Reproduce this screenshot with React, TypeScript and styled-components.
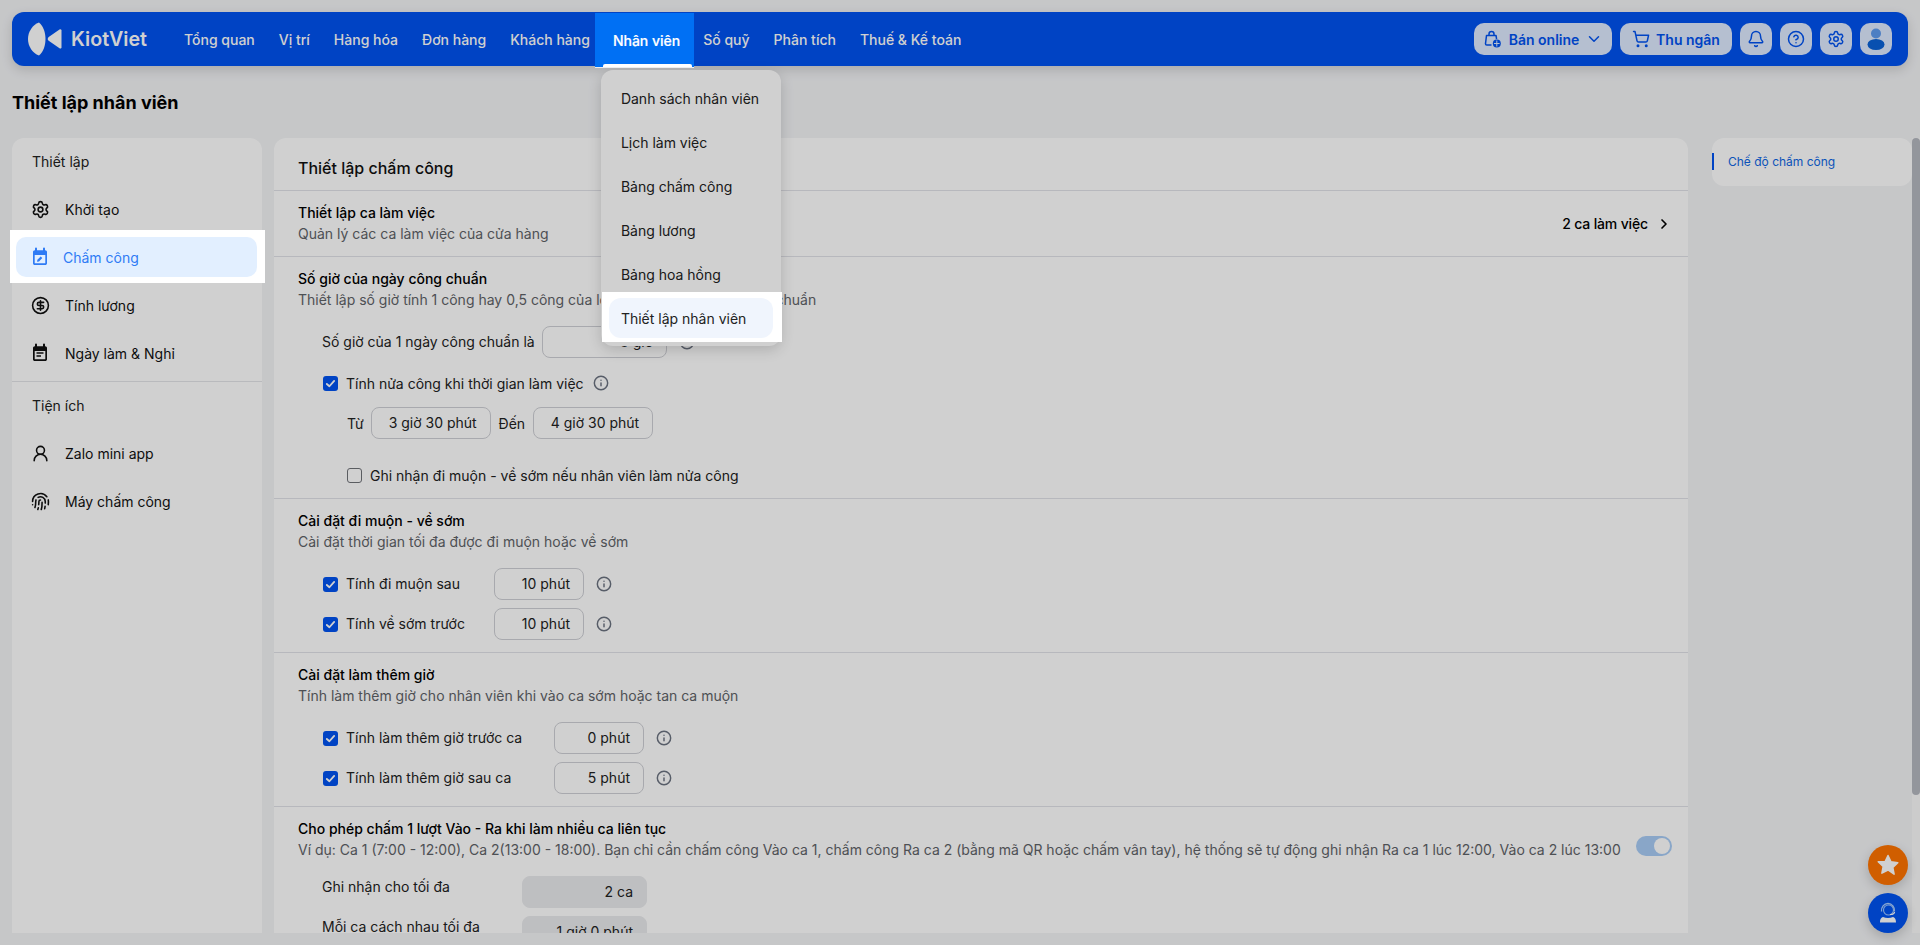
import React from 'react'
import styled, { createGlobalStyle } from 'styled-components'
import { Bell, ChevronDown, ChevronRight, CircleDollarSign, CircleHelp, Fingerprint, Info, Settings, ShoppingCart, UserRound } from 'lucide-react'

const brand = '#0053f1'

const GlobalStyle = createGlobalStyle`
  html, body {
    margin: 0;
    height: 100%;
    overflow: hidden;
    background: #f3f4f6;
    font-family: Inter, "Noto Sans", sans-serif;
    font-size: 14px;
    color: #111;
  }
  * { box-sizing: border-box; }
`

const Page = styled.div`
  height: 945px;
  display: flex;
  flex-direction: column;
`
const Dim = styled.div`
  position: fixed;
  inset: 0;
  z-index: 10;
  background: rgba(0, 0, 0, 0.184);
`

/* header */
const Header = styled.header`
  margin: 12px 12px 0;
  height: 54px;
  flex-shrink: 0;
  display: flex;
  align-items: center;
  padding: 0 16px;
  border-radius: 12px;
  background: ${brand};
  box-shadow: 0 4px 12px rgba(0, 0, 0, 0.14);
`
const Logo = styled.div`
  display: flex;
  align-items: center;
  gap: 9px;
  width: 144px;
  flex-shrink: 0;
  color: #fff;
  font-size: 19.7px;
  font-weight: 600;
`
const Nav = styled.nav`
  display: flex;
  align-items: center;
  height: 100%;
`
const NavItem = styled.div`
  padding: 0 12px;
  color: #fff;
  font-weight: 500;
  white-space: nowrap;
`
const NavSlot = styled.div`
  position: relative;
  height: 100%;
`
const ActiveNav = styled.div`
  position: relative;
  z-index: 11;
  height: 55px;
  margin: 1px -3px 0 -7px;
  padding: 0 14px 0 18px;
  display: flex;
  align-items: center;
  background: #0070f4;
  border-bottom: 1.5px solid #eceef0;
  color: #fff;
  font-weight: 500;
  -webkit-text-stroke: 0.2px #fff;
  white-space: nowrap;
  &::after {
    content: '';
    position: absolute;
    left: 8px;
    right: 2px;
    bottom: 0;
    height: 3px;
    border-radius: 2px 2px 0 0;
    background: #fff;
  }
`
const Menu = styled.div`
  position: absolute;
  left: -1px;
  top: 58px;
  width: 180px;
  padding: 8px;
  display: flex;
  flex-direction: column;
  gap: 4px;
  border-radius: 12px;
  background: #fff;
  box-shadow: 0 4px 14px rgba(0, 0, 0, 0.16);
`
const MenuItem = styled.div<{ $active?: boolean }>`
  height: 40px;
  display: flex;
  align-items: center;
  padding: 0 12px;
  border-radius: 12px;
  white-space: nowrap;
  color: #222;
  background: ${p => (p.$active ? '#f0f5fd' : 'transparent')};
`
const MenuCutout = styled.div`
  position: relative;
  z-index: 11;
  margin: -6px -9px -4px -7px;
  padding: 6px 9px 4px 7px;
  background: #fff;
`
const Actions = styled.div`
  margin-left: auto;
  display: flex;
  align-items: center;
  gap: 8px;
`
const ActionButton = styled.div<{ $width: number }>`
  width: ${p => p.$width}px;
  height: 32px;
  display: flex;
  align-items: center;
  justify-content: center;
  gap: 6px;
  border-radius: 10px;
  background: #deeaff;
  color: ${brand};
  font-weight: 600;
  white-space: nowrap;
`

/* title + columns */
const PageTitle = styled.h1`
  margin: 0;
  height: 72px;
  flex-shrink: 0;
  padding: 0 12px;
  display: flex;
  align-items: center;
  font-size: 18px;
  font-weight: 700;
  color: #000;
`
const Columns = styled.div`
  height: 795px;
  flex-shrink: 0;
  display: flex;
  padding-left: 12px;
`
const Sidebar = styled.aside`
  width: 250px;
  flex-shrink: 0;
  border-radius: 12px 12px 0 0;
  background: #fff;
`
const SideLabel = styled.div`
  height: 48px;
  padding: 0 0 1px 20px;
  display: flex;
  align-items: center;
  color: #222;
`
const SideList = styled.div`
  margin-top: 3px;
  padding: 0 5px 0 4px;
  display: flex;
  flex-direction: column;
  gap: 8px;
`
const SideItem = styled.div<{ $active?: boolean }>`
  height: 40px;
  display: flex;
  align-items: center;
  gap: ${p => (p.$active ? '13px' : '15px')};
  padding-left: 14px;
  border-radius: 10px;
  background: ${p => (p.$active ? '#e2efff' : 'transparent')};
  color: ${p => (p.$active ? '#2f7bf5' : '#111')};
`
const SideIcon = styled.span`
  width: 20px;
  height: 20px;
  flex-shrink: 0;
  display: flex;
  align-items: center;
  justify-content: center;
`
const SideCutout = styled.div`
  position: relative;
  z-index: 11;
  margin: -7px -8px -6px -6px;
  padding: 7px 8px 6px 6px;
  background: #fff;
`
const SideDivider = styled.hr`
  margin: 8px 0 0;
  border: 0;
  border-top: 1px solid #e3e4e8;
`
const Main = styled.main`
  width: 1414px;
  margin-left: 12px;
  flex-shrink: 0;
  overflow: hidden;
  border-radius: 12px 12px 0 0;
  background: #fff;
`
const MainHead = styled.div`
  height: 52px;
  padding: 8px 24px 0;
  display: flex;
  align-items: center;
  font-size: 16px;
  font-weight: 500;
`
const Section = styled.section`
  border-top: 1px solid #e1e2e8;
  padding: 12px 16px 12px 24px;
`
const SectionHead = styled.div`
  display: flex;
  justify-content: space-between;
  align-items: center;
`
const SectionTitle = styled.div`
  height: 20px;
  line-height: 20px;
  font-weight: 500;
  color: #000;
`
const SectionDesc = styled.div`
  margin-top: 1px;
  height: 20px;
  line-height: 20px;
  color: #5f6368;
  white-space: nowrap;
`
const LinkValue = styled.div`
  display: flex;
  align-items: center;
  gap: 8px;
  font-weight: 500;
  letter-spacing: -0.15px;
  color: #000;
`
const Rows = styled.div`
  margin-top: 16px;
  padding-left: 24px;
  display: flex;
  flex-direction: column;
  gap: 8px;
`
const Row = styled.div<{ $indent?: boolean; $top?: number; $short?: boolean }>`
  min-height: ${p => (p.$short ? 21 : 32)}px;
  display: flex;
  align-items: center;
  margin-left: ${p => (p.$indent ? '25px' : '0')};
  margin-top: ${p => p.$top ?? 0}px;
  color: #222;
  white-space: nowrap;
`
const RowLabel = styled.div<{ $width: number; $top?: boolean }>`
  width: ${p => p.$width}px;
  flex-shrink: 0;
  align-self: ${p => (p.$top ? 'flex-start' : 'center')};
  line-height: 22px;
`
const Box = styled.div<{ $width: number; $disabled?: boolean }>`
  width: ${p => p.$width}px;
  height: 32px;
  flex-shrink: 0;
  display: flex;
  align-items: center;
  justify-content: flex-end;
  padding: 0 13px 1px 0;
  border-radius: 8px;
  border: 1px solid ${p => (p.$disabled ? '#e9eaed' : '#cfd0d6')};
  background: ${p => (p.$disabled ? '#e9eaed' : '#fff')};
  color: #222;
`
const Check = styled.span<{ $on?: boolean }>`
  width: 15px;
  height: 15px;
  flex-shrink: 0;
  margin: 0 8px 0 ${p => (p.$on ? 1 : 0)}px;
  display: flex;
  align-items: center;
  justify-content: center;
  border-radius: 3px;
  background: ${p => (p.$on ? brand : '#fff')};
  border: ${p => (p.$on ? '0' : '1.5px solid #6f7278')};
`
const Tip = styled(Info)<{ $gap?: number }>`
  width: 16px;
  height: 16px;
  flex-shrink: 0;
  margin-left: ${p => p.$gap ?? 12}px;
  color: #6b7280;
  stroke-width: 2.2;
`
const RangeText = styled.span<{ $gap: number }>`
  margin-right: ${p => p.$gap}px;
`
const Toggle = styled.div`
  width: 36px;
  height: 20px;
  margin-top: 13px;
  padding: 2px;
  display: flex;
  justify-content: flex-end;
  border-radius: 10px;
  background: #a8ccf6;
  &::after {
    content: '';
    width: 16px;
    height: 16px;
    border-radius: 50%;
    background: #fff;
  }
`

/* right rail */
const Rail = styled.aside`
  width: 200px;
  height: 48px;
  margin-left: 24px;
  flex-shrink: 0;
  display: flex;
  align-items: center;
  gap: 14px;
  padding-bottom: 1px;
  border-radius: 12px;
  background: #fff;
  color: #0d66e4;
  font-size: 12px;
  &::before {
    content: '';
    width: 2px;
    height: 17px;
    background: ${brand};
  }
`
const ScrollTrack = styled.div`
  width: 8px;
  flex-shrink: 0;
  background: #fbfbfb;
`
const ScrollThumb = styled.div`
  height: 657px;
  border-radius: 4px;
  background: #b5b8c0;
`
const Fabs = styled.div`
  position: fixed;
  right: 12px;
  bottom: 12px;
  display: flex;
  flex-direction: column;
  gap: 8px;
`
const Fab = styled.div<{ $color: string }>`
  width: 40px;
  height: 40px;
  display: flex;
  align-items: center;
  justify-content: center;
  border-radius: 50%;
  background: ${p => p.$color};
  box-shadow: 0 4px 12px rgba(0, 0, 0, 0.18);
`

const LogoMark = () => (
  <svg width="34" height="34" viewBox="0 0 34 34">
    <path d="M11 0.500C15.500 4 17.500 11 17.500 17s-2 13-6.500 16.500C4.500 31 0 24.500 0 17S4.500 3 11 0.500Z" fill="#fff" />
    <path d="M33.500 9c.4-1.400-.9-2.300-2-1.500L20.700 14.900c-1.300 1.100-1.300 2.700 0 3.800l10.800 7.500c1.100.8 2.400-.1 2-1.500V9Z" fill="#fff" />
  </svg>
)
const OnlineIcon = () => (
  <svg width="20" height="20" viewBox="0 0 20 20" fill="none" stroke={brand} strokeWidth="1.500">
    <path d="M8.500 16H3.800c-.8 0-1.300-.6-1.300-1.300L3.500 6.500h9.500l.6 3.500" strokeLinejoin="round" />
    <path d="M6 6.500V5a2.500 2.500 0 0 1 5 0v1.500" />
    <circle cx="13.800" cy="14.500" r="4" fill={brand} stroke="none" />
    <path d="M13.800 11.500v6M11 14.500h5.600" stroke="#deeaff" strokeWidth="1" />
  </svg>
)
const AvatarIcon = () => (
  <svg width="24" height="24" viewBox="0 0 24 24">
    <circle cx="12" cy="6.500" r="5" fill="#5f9cf0" />
    <ellipse cx="12" cy="17.500" rx="8.500" ry="5.500" fill="#0a63d8" />
  </svg>
)
const AttendanceIcon = () => (
  <svg width="20" height="20" viewBox="0 0 20 20">
    <path d="M6 1.500v3M14 1.500v3" stroke="#2f7bf5" strokeWidth="2" strokeLinecap="round" />
    <path d="M3 5c0-1 .8-1.800 1.800-1.800h10.400c1 0 1.800.8 1.800 1.800v11.200c0 1-.8 1.800-1.800 1.800H4.800c-1 0-1.800-.8-1.800-1.800V5Zm1.700 3v8.300h10.600V8H4.700Z" fill="#2f7bf5" />
    <path d="M7 14.800l.4-2 3.300-3.300 1.600 1.600L9 14.400l-2 .4Z" fill="#2f7bf5" />
  </svg>
)
const ScheduleIcon = () => (
  <svg width="20" height="20" viewBox="0 0 20 20">
    <path d="M6 1.500v3M14 1.500v3" stroke="#111" strokeWidth="2" strokeLinecap="round" />
    <path d="M3 5c0-1 .8-1.800 1.800-1.800h10.400c1 0 1.800.8 1.800 1.800v11.200c0 1-.8 1.800-1.800 1.800H4.800c-1 0-1.800-.8-1.800-1.800V5Zm1.700 3v8.300h10.600V8H4.700Z" fill="#111" />
    <path d="M6.500 10h7M6.500 13h4.500" stroke="#111" strokeWidth="1.500" />
  </svg>
)
const StarIcon = () => (
  <svg width="24" height="24" viewBox="0 0 24 24">
    <path d="M12 2.500l3 6.300 6.800.9-5 4.700 1.300 6.800L12 17l-6.100 3.200 1.300-6.800-5-4.700L9 8.800l3-6.300Z" fill="#fff" stroke="#fff" strokeWidth="1.500" strokeLinejoin="round" />
  </svg>
)
const SupportIcon = () => (
  <svg width="24" height="24" viewBox="0 0 24 24" fill="none">
    <circle cx="12.500" cy="9" r="5" fill={brand} stroke="#9cc4ff" strokeWidth="1.100" />
    <path d="M5.500 10.500C5 6 8 2.500 12 2.500s7 3.500 6.500 8" stroke="#a8ccff" strokeWidth="1.300" />
    <path d="M18.500 11c0 1.500-2 2.500-4.500 2.500" stroke="#fff" strokeWidth="1.200" />
    <path d="M4 21.500c0-4 1.500-5 3-5.500 3 1.300 7 1.300 10 0 1.500.5 3 1.500 3 5.500H4Z" fill="#fff" />
  </svg>
)
const Tick = () => (
  <svg width="11" height="11" viewBox="0 0 12 12" fill="none">
    <path d="M2 6.500 4.800 9 10 3.200" stroke="#fff" strokeWidth="2" strokeLinecap="round" strokeLinejoin="round" />
  </svg>
)

const navBefore = ['Tổng quan', 'Vị trí', 'Hàng hóa', 'Đơn hàng', 'Khách hàng']
const navAfter = ['Số quỹ', 'Phân tích', 'Thuế & Kế toán']
const menuItems = ['Danh sách nhân viên', 'Lịch làm việc', 'Bảng chấm công', 'Bảng lương', 'Bảng hoa hồng']

const App = () => {
  return (
    <Page>
      <GlobalStyle />
      <Header>
        <Logo>
          <LogoMark />
          KiotViet
        </Logo>
        <Nav>
          {navBefore.map(n => <NavItem key={n}>{n}</NavItem>)}
          <NavSlot>
            <ActiveNav>Nhân viên</ActiveNav>
            <Menu>
              {menuItems.map(m => <MenuItem key={m}>{m}</MenuItem>)}
              <MenuCutout>
                <MenuItem $active>Thiết lập nhân viên</MenuItem>
              </MenuCutout>
            </Menu>
          </NavSlot>
          {navAfter.map(n => <NavItem key={n}>{n}</NavItem>)}
        </Nav>
        <Actions>
          <ActionButton $width={138}><OnlineIcon />Bán online<ChevronDown size={18} /></ActionButton>
          <ActionButton $width={112}><ShoppingCart size={18} />Thu ngân</ActionButton>
          <ActionButton $width={32}><Bell size={18} /></ActionButton>
          <ActionButton $width={32}><CircleHelp size={18} /></ActionButton>
          <ActionButton $width={32}><Settings size={18} /></ActionButton>
          <ActionButton $width={32}><AvatarIcon /></ActionButton>
        </Actions>
      </Header>
      <PageTitle>Thiết lập nhân viên</PageTitle>
      <Columns>
        <Sidebar>
          <SideLabel>Thiết lập</SideLabel>
          <SideList>
            <SideItem><SideIcon><Settings size={19} /></SideIcon>Khởi tạo</SideItem>
            <SideCutout>
              <SideItem $active><SideIcon><AttendanceIcon /></SideIcon>Chấm công</SideItem>
            </SideCutout>
            <SideItem><SideIcon><CircleDollarSign size={19} /></SideIcon>Tính lương</SideItem>
            <SideItem><SideIcon><ScheduleIcon /></SideIcon>Ngày làm &amp; Nghỉ</SideItem>
          </SideList>
          <SideDivider />
          <SideLabel>Tiện ích</SideLabel>
          <SideList>
            <SideItem><SideIcon><UserRound size={19} /></SideIcon>Zalo mini app</SideItem>
            <SideItem><SideIcon><Fingerprint size={19} /></SideIcon>Máy chấm công</SideItem>
          </SideList>
        </Sidebar>
        <Main>
          <MainHead>Thiết lập chấm công</MainHead>
          <Section>
            <SectionHead>
              <div>
                <SectionTitle>Thiết lập ca làm việc</SectionTitle>
                <SectionDesc>Quản lý các ca làm việc của cửa hàng</SectionDesc>
              </div>
              <LinkValue>2 ca làm việc <ChevronRight size={16} strokeWidth={2.500} /></LinkValue>
            </SectionHead>
          </Section>
          <Section>
            <SectionTitle>Số giờ của ngày công chuẩn</SectionTitle>
            <SectionDesc>Thiết lập số giờ tính 1 công hay 0,5 công của loại ca trong cả ngày công chuẩn</SectionDesc>
            <Rows>
              <Row>
                <RowLabel $width={220}>Số giờ của 1 ngày công chuẩn là</RowLabel>
                <Box $width={125}>8 giờ</Box>
                <Tip />
              </Row>
              <Row $top={1}>
                <Check $on><Tick /></Check>
                Tính nửa công khi thời gian làm việc
                <Tip $gap={9} />
              </Row>
              <Row $indent>
                <RangeText $gap={7}>Từ</RangeText>
                <Box $width={120}>3 giờ 30 phút</Box>
                <RangeText $gap={8}>&nbsp;&nbsp;Đến</RangeText>
                <Box $width={120}>4 giờ 30 phút</Box>
              </Row>
              <Row $indent $short $top={18}>
                <Check />
                Ghi nhận đi muộn - về sớm nếu nhân viên làm nửa công
              </Row>
            </Rows>
          </Section>
          <Section>
            <SectionTitle>Cài đặt đi muộn - về sớm</SectionTitle>
            <SectionDesc>Cài đặt thời gian tối đa được đi muộn hoặc về sớm</SectionDesc>
            <Rows>
              <Row>
                <Check $on><Tick /></Check>
                <RowLabel $width={148}>Tính đi muộn sau</RowLabel>
                <Box $width={90}>10 phút</Box>
                <Tip />
              </Row>
              <Row>
                <Check $on><Tick /></Check>
                <RowLabel $width={148}>Tính về sớm trước</RowLabel>
                <Box $width={90}>10 phút</Box>
                <Tip />
              </Row>
            </Rows>
          </Section>
          <Section>
            <SectionTitle>Cài đặt làm thêm giờ</SectionTitle>
            <SectionDesc>Tính làm thêm giờ cho nhân viên khi vào ca sớm hoặc tan ca muộn</SectionDesc>
            <Rows>
              <Row>
                <Check $on><Tick /></Check>
                <RowLabel $width={208}>Tính làm thêm giờ trước ca</RowLabel>
                <Box $width={90}>0 phút</Box>
                <Tip />
              </Row>
              <Row>
                <Check $on><Tick /></Check>
                <RowLabel $width={208}>Tính làm thêm giờ sau ca</RowLabel>
                <Box $width={90}>5 phút</Box>
                <Tip />
              </Row>
            </Rows>
          </Section>
          <Section>
            <SectionHead>
              <div>
                <SectionTitle>Cho phép chấm 1 lượt Vào - Ra khi làm nhiều ca liên tục</SectionTitle>
                <SectionDesc>Ví dụ: Ca 1 (7:00 - 12:00), Ca 2(13:00 - 18:00). Bạn chỉ cần chấm công Vào ca 1, chấm công Ra ca 2 (bằng mã QR hoặc chấm vân tay), hệ thống sẽ tự động ghi nhận Ra ca 1 lúc 12:00, Vào ca 2 lúc 13:00</SectionDesc>
              </div>
              <Toggle />
            </SectionHead>
            <Rows>
              <Row>
                <RowLabel $width={200} $top>Ghi nhận cho tối đa</RowLabel>
                <Box $width={125} $disabled>2 ca</Box>
              </Row>
              <Row>
                <RowLabel $width={200} $top>Mỗi ca cách nhau tối đa</RowLabel>
                <Box $width={125} $disabled>1 giờ 0 phút</Box>
              </Row>
            </Rows>
          </Section>
        </Main>
        <Rail>Chế độ chấm công</Rail>
        <ScrollTrack><ScrollThumb /></ScrollTrack>
      </Columns>
      <Fabs>
        <Fab $color="#ff7400"><StarIcon /></Fab>
        <Fab $color={brand}><SupportIcon /></Fab>
      </Fabs>
      <Dim />
    </Page>
  )
}

export default App
